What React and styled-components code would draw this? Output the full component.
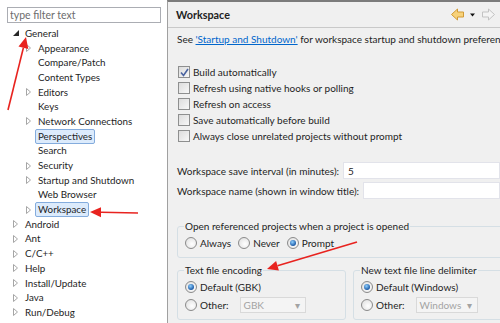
import React from 'react';
import styled, { createGlobalStyle } from 'styled-components';

const GlobalStyle = createGlobalStyle`
  html, body {
    margin: 0;
    padding: 0;
  }
  body {
    font-family: Lato, "Open Sans", sans-serif;
    font-size: 10px;
    color: #1e1e1e;
    background: #ffffff;
  }
  * {
    box-sizing: border-box;
  }
`;

const Page = styled.div`
  position: relative;
  display: flex;
  width: 500px;
  height: 323px;
  overflow: hidden;
`;

const TreePane = styled.div`
  width: 167px;
  flex-shrink: 0;
  background: #ffffff;
  padding-top: 7px;
  font-size: 9.8px;
`;

const Filter = styled.input`
  display: block;
  width: 154px;
  height: 16px;
  margin: 0 0 3px 7px;
  padding: 0 2px;
  border: 1px solid #abadb3;
  font: inherit;
  font-size: 10.5px;
  color: #1e1e1e;
  outline: none;

  &::placeholder {
    color: #6d6d6d;
  }
`;

const Row = styled.div`
  display: flex;
  align-items: center;
  height: 14.7px;
  padding-left: ${(p) => 12 + p.$level * 13}px;
  white-space: nowrap;
`;

const Twisty = styled.span`
  display: inline-flex;
  align-items: center;
  justify-content: center;
  width: 7px;
  margin-right: 6px;
`;

const Label = styled.span`
  margin-left: -3px;
  padding: 0 2px;
  line-height: 13px;
  border: 1px solid ${(p) => (p.$selected ? '#84acdd' : 'transparent')};
  border-radius: 2px;
  background: ${(p) => (p.$selected ? '#dcebfc' : 'transparent')};
`;

const RightPane = styled.div`
  flex: 1;
  min-width: 0;
  background: #f0f0f0;
  border-left: 1px solid #a0a0a0;
  border-top: 2px solid #7c7c7c;
  white-space: nowrap;
`;

const Header = styled.div`
  display: flex;
  align-items: center;
  justify-content: space-between;
  height: 26px;
  padding: 0 3px 0 8px;
  border-bottom: 1px solid #c9c9c9;
`;

const Title = styled.span`
  font-weight: bold;
  font-size: 10.8px;
`;

const Body = styled.div`
  padding: 4px 0 0 9px;
`;

const Line = styled.div`
  height: 15px;
  line-height: 15px;
`;

const Link = styled.span`
  color: #0066cc;
  text-decoration: underline;
`;

const Checks = styled.div`
  margin-top: 17px;
`;

const CheckRow = styled.label`
  display: flex;
  align-items: center;
  height: 16px;
  gap: 3px;
`;

const Box = styled.span`
  display: inline-flex;
  align-items: center;
  justify-content: center;
  width: 12px;
  height: 12px;
  margin-left: 1px;
  border: 1px solid #8e8f8f;
  background: linear-gradient(135deg, #dcdcdc, #f8f8f8);
`;

const Fields = styled.div`
  margin-top: 18px;
  display: flex;
  flex-direction: column;
  gap: 3px;
`;

const FieldRow = styled.div`
  display: flex;
  align-items: center;
  gap: 4px;
  height: 17px;
`;

const TextInput = styled.div`
  flex: 1;
  height: 17px;
  padding-left: 4px;
  line-height: 16px;
  background: #ffffff;
  border: 1px solid #e2e3ea;
`;

const Group = styled.fieldset`
  margin: ${(p) => p.$top || 0}px 0 0 0;
  padding: 0 0 6px 7px;
  border: 1px solid #d5dfe5;
  border-radius: 3px;
  width: ${(p) => p.$width}px;
  flex-shrink: 0;
`;

const Legend = styled.legend`
  padding: 0 1px;
  margin-left: -1px;
  line-height: 14px;
`;

const Radios = styled.div`
  display: flex;
  flex-direction: ${(p) => (p.$column ? 'column' : 'row')};
  gap: ${(p) => (p.$column ? 2 : 7)}px;
  margin-top: 2px;
`;

const RadioRow = styled.label`
  display: flex;
  align-items: center;
  gap: 3px;
  height: 16px;
`;

const Radio = styled.span`
  position: relative;
  width: 12px;
  height: 12px;
  border-radius: 50%;
  border: 1px solid #8a8a8a;
  background: radial-gradient(circle at 60% 60%, #ffffff, #dcdcdc);

  &::after {
    content: '';
    display: ${(p) => (p.$on ? 'block' : 'none')};
    position: absolute;
    left: 2px;
    top: 2px;
    width: 6px;
    height: 6px;
    border-radius: 50%;
    background: radial-gradient(circle at 40% 35%, #8fd0ff, #1c5aa6 70%);
  }
`;

const Combo = styled.div`
  display: flex;
  align-items: center;
  justify-content: space-between;
  width: ${(p) => p.$width}px;
  height: 16px;
  margin-left: ${(p) => p.$gap}px;
  padding: 0 5px 0 3px;
  background: #f4f4f4;
  border: 1px solid #d9d9d9;
  color: #a3a3a3;
`;

const Bottom = styled.div`
  display: flex;
  gap: 7px;
  margin-top: 5px;
`;

const Overlay = styled.svg`
  position: absolute;
  left: 0;
  top: 0;
  pointer-events: none;
`;

const Expanded = () => (
  <svg width="6" height="6" viewBox="0 0 6 6">
    <path d="M6 0 L6 6 L0 6 Z" fill="#262626" />
  </svg>
);

const Collapsed = () => (
  <svg width="5" height="8" viewBox="0 0 5 8">
    <path d="M0.5 0.5 L4.5 4 L0.5 7.5 Z" fill="#ffffff" stroke="#a6a6a6" />
  </svg>
);

const Check = ({ on }) => (
  <Box>
    {on && (
      <svg width="9" height="9" viewBox="0 0 9 9">
        <path d="M1 4.5 L3.5 7.5 L8 1" fill="none" stroke="#4b64a0" strokeWidth="1.6" />
      </svg>
    )}
  </Box>
);

const NavArrows = () => (
  <svg width="46" height="14" viewBox="0 0 46 14">
    <path d="M0.5 6.5 L6.5 1 L6.5 4 L12.5 4 L12.5 9 L6.5 9 L6.5 12 Z" fill="#f7d27a" stroke="#d19a35" />
    <path d="M19 5.5 L24 5.5 L21.5 8.5 Z" fill="#111111" />
    <path d="M43.5 6.5 L37.5 1 L37.5 4 L31.5 4 L31.5 9 L37.5 9 L37.5 12 Z" fill="#f4f4f4" stroke="#c3c3c3" />
  </svg>
);

const tree = [
  { label: 'General', level: 0, open: true },
  { label: 'Appearance', level: 1, kids: true },
  { label: 'Compare/Patch', level: 1 },
  { label: 'Content Types', level: 1 },
  { label: 'Editors', level: 1, kids: true },
  { label: 'Keys', level: 1 },
  { label: 'Network Connections', level: 1, kids: true },
  { label: 'Perspectives', level: 1, selected: true },
  { label: 'Search', level: 1 },
  { label: 'Security', level: 1, kids: true },
  { label: 'Startup and Shutdown', level: 1, kids: true },
  { label: 'Web Browser', level: 1 },
  { label: 'Workspace', level: 1, kids: true, selected: true },
  { label: 'Android', level: 0, kids: true },
  { label: 'Ant', level: 0, kids: true },
  { label: 'C/C++', level: 0, kids: true },
  { label: 'Help', level: 0, kids: true },
  { label: 'Install/Update', level: 0, kids: true },
  { label: 'Java', level: 0, kids: true },
  { label: 'Run/Debug', level: 0, kids: true },
];

const checks = [
  { label: 'Build automatically', on: true },
  { label: 'Refresh using native hooks or polling' },
  { label: 'Refresh on access' },
  { label: 'Save automatically before build' },
  { label: 'Always close unrelated projects without prompt' },
];

const arrows = [
  { line: 'M8 110 L23.4 47.7', head: '26,37 28.3,48.9 18.5,46.5' },
  { line: 'M138 213 L101 212.2', head: '90,212 101,207.2 101,217.2' },
  { line: 'M357 242 L277.5 265.8', head: '267,269 278.9,270.6 276.1,261' },
];

export default function App() {
  return (
    <Page>
      <GlobalStyle />
      <TreePane>
        <Filter placeholder="type filter text" />
        {tree.map((item) => (
          <Row key={item.label} $level={item.level}>
            <Twisty>{item.open ? <Expanded /> : item.kids ? <Collapsed /> : null}</Twisty>
            <Label $selected={item.selected}>{item.label}</Label>
          </Row>
        ))}
      </TreePane>

      <RightPane>
        <Header>
          <Title>Workspace</Title>
          <NavArrows />
        </Header>
        <Body>
          <Line>
            See <Link>'Startup and Shutdown'</Link> for workspace startup and shutdown preferences
          </Line>

          <Checks>
            {checks.map((c) => (
              <CheckRow key={c.label}>
                <Check on={c.on} />
                {c.label}
              </CheckRow>
            ))}
          </Checks>

          <Fields>
            <FieldRow>
              Workspace save interval (in minutes):
              <TextInput>5</TextInput>
            </FieldRow>
            <FieldRow>
              Workspace name (shown in window title):
              <TextInput />
            </FieldRow>
          </Fields>

          <Group $width={340} $top={20}>
            <Legend>Open referenced projects when a project is opened</Legend>
            <Radios>
              <RadioRow><Radio />Always</RadioRow>
              <RadioRow><Radio />Never</RadioRow>
              <RadioRow><Radio $on />Prompt</RadioRow>
            </Radios>
          </Group>

          <Bottom>
            <Group $width={169}>
              <Legend>Text file encoding</Legend>
              <Radios $column>
                <RadioRow><Radio $on />Default (GBK)</RadioRow>
                <RadioRow>
                  <Radio />Other:
                  <Combo $width={66} $gap={8}>GBK<span>▾</span></Combo>
                </RadioRow>
              </Radios>
            </Group>
            <Group $width={170}>
              <Legend>New text file line delimiter</Legend>
              <Radios $column>
                <RadioRow><Radio $on />Default (Windows)</RadioRow>
                <RadioRow>
                  <Radio />Other:
                  <Combo $width={62} $gap={8}>Windows<span>▾</span></Combo>
                </RadioRow>
              </Radios>
            </Group>
          </Bottom>
        </Body>
      </RightPane>

      <Overlay width="500" height="323" viewBox="0 0 500 323">
        {arrows.map((a, i) => (
          <g key={i}>
            <path d={a.line} stroke="#e8231f" strokeWidth="1.6" fill="none" />
            <polygon points={a.head} fill="#e8231f" />
          </g>
        ))}
      </Overlay>
    </Page>
  );
}
